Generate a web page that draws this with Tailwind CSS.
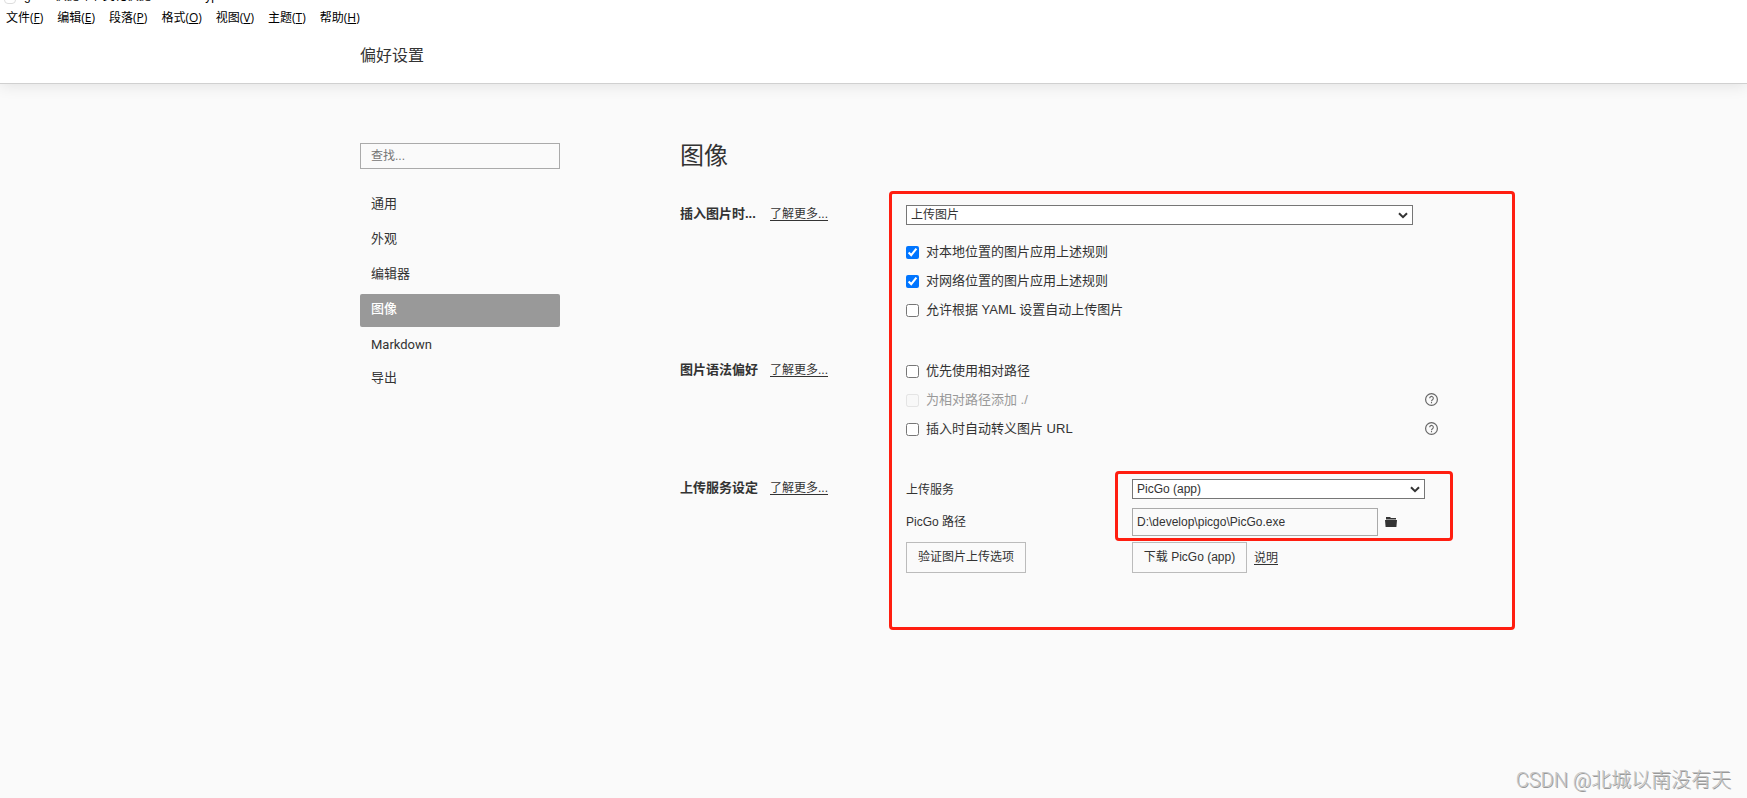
<!DOCTYPE html>
<html lang="zh-CN">
<head>
<meta charset="utf-8">
<title>偏好设置</title>
<script src="https://cdn.jsdelivr.net/npm/@tailwindcss/browser@4"></script>
</head>
<body class="relative min-h-screen overflow-hidden bg-[#fafafa] font-['Liberation_Sans','Noto_Sans_CJK_SC',sans-serif] text-[13px] leading-5 text-[#333]">
<header class="border-b border-[#d0d0d0] bg-white shadow-[0_0_16px_rgba(0,0,0,0.12)]">
  <div class="flex h-1 items-end overflow-hidden pl-1 text-xs leading-4 text-black">
    <span class="mr-2 h-4 w-3 rounded-sm border border-[#ddd]"></span>
    <span class="mr-6">g</span><span class="mr-12">快捷环节美化快捷</span><span>Typ</span>
  </div>
  <nav class="flex h-7 items-center gap-3.5 pl-1.5 font-['Open_Sans','Noto_Sans_CJK_SC',sans-serif] text-xs text-black" aria-label="菜单">
    <button>文件(<u>F</u>)</button>
    <button>编辑(<u>E</u>)</button>
    <button>段落(<u>P</u>)</button>
    <button>格式(<u>O</u>)</button>
    <button>视图(<u>V</u>)</button>
    <button>主题(<u>T</u>)</button>
    <button>帮助(<u>H</u>)</button>
  </nav>
  <div class="mx-auto flex h-[51px] w-full max-w-[1027px] items-center pb-1"><p class="text-base">偏好设置</p></div>
</header>

<main class="mx-auto flex w-full max-w-[1027px] pt-[59px]">
  <aside class="w-[200px] shrink-0">
    <input type="search" aria-label="查找" placeholder="查找..." class="block h-[26px] w-full border border-[#aaa] px-2.5 text-xs placeholder:text-[#757575]">
    <nav class="mt-5 flex flex-col gap-0.5" aria-label="设置分类">
      <a href="#general" class="h-[33px] rounded-xs px-[11px] leading-[30px]">通用</a>
      <a href="#appearance" class="h-[33px] rounded-xs px-[11px] leading-[30px]">外观</a>
      <a href="#editor" class="h-[33px] rounded-xs px-[11px] leading-[30px]">编辑器</a>
      <a href="#image" class="h-[33px] rounded-xs bg-[#999] px-[11px] leading-[30px] font-medium text-white">图像</a>
      <a href="#markdown" class="h-[33px] rounded-xs px-[11px] font-['Roboto',sans-serif] leading-8">Markdown</a>
      <a href="#export" class="h-[33px] rounded-xs px-[11px] leading-7">导出</a>
    </nav>
  </aside>

  <div class="ml-[120px] flex-1">
    <h1 class="text-2xl leading-[26px]">图像</h1>

    <div class="relative mt-9">
      <section class="flex">
        <div class="flex w-[226px] shrink-0 gap-3 leading-[18px]">
          <h2 class="w-[78px] font-bold">插入图片时...</h2><a href="#more1" class="text-xs leading-[18px] underline underline-offset-2">了解更多...</a>
        </div>
        <div class="flex-1">
          <div class="relative w-[507px]">
            <select aria-label="插入图片时" class="block h-5 w-full appearance-none border border-[#767676] bg-white pl-1 text-xs leading-[18px]"><option>上传图片</option></select>
            <svg class="pointer-events-none absolute top-[7px] right-[5px] h-[7px] w-[10px]" viewBox="0 0 10 7" fill="none" stroke="#333" stroke-width="2"><path d="M1 1.2 5 5.2 9 1.2"/></svg>
          </div>
          <div class="mt-[17px] flex flex-col gap-[9px]">
            <label class="flex items-center gap-[7px]"><input type="checkbox" checked class="size-[13px]">对本地位置的图片应用上述规则</label>
            <label class="flex items-center gap-[7px]"><input type="checkbox" checked class="size-[13px]">对网络位置的图片应用上述规则</label>
            <label class="flex items-center gap-[7px]"><input type="checkbox" class="size-[13px]">允许根据 YAML 设置自动上传图片</label>
          </div>
        </div>
      </section>

      <section class="mt-[41px] flex">
        <div class="flex w-[226px] shrink-0 gap-3 leading-[18px]">
          <h2 class="w-[78px] font-bold">图片语法偏好</h2><a href="#more2" class="text-xs leading-[18px] underline underline-offset-2">了解更多...</a>
        </div>
        <div class="flex w-[532px] flex-col gap-[9px]">
          <label class="flex items-center gap-[7px]"><input type="checkbox" class="size-[13px]">优先使用相对路径</label>
          <div class="flex items-center justify-between">
            <label class="flex items-center gap-[7px] text-[#999]"><input type="checkbox" disabled class="size-[13px] opacity-50">为相对路径添加 ./</label>
            <button aria-label="帮助" class="pb-0.5"><svg class="size-[13px]" viewBox="0 0 13 13" fill="none" stroke="#666"><circle cx="6.500" cy="6.500" r="5.900" stroke-width="1.200"/><path d="M4.700 5.200a1.800 1.800 0 1 1 2.800 1.500c-.7.500-1 .8-1 1.500M6.500 9v1.200" stroke-width="1.100"/></svg></button>
          </div>
          <div class="flex items-center justify-between">
            <label class="flex items-center gap-[7px]"><input type="checkbox" class="size-[13px]">插入时自动转义图片 URL</label>
            <button aria-label="帮助" class="pb-0.5"><svg class="size-[13px]" viewBox="0 0 13 13" fill="none" stroke="#666"><circle cx="6.500" cy="6.500" r="5.900" stroke-width="1.200"/><path d="M4.700 5.200a1.800 1.800 0 1 1 2.800 1.500c-.7.500-1 .8-1 1.500M6.500 9v1.200" stroke-width="1.100"/></svg></button>
          </div>
        </div>
      </section>

      <section class="mt-10 flex">
        <div class="flex w-[226px] shrink-0 gap-3 leading-[18px]">
          <h2 class="w-[78px] font-bold">上传服务设定</h2><a href="#more3" class="text-xs leading-[18px] underline underline-offset-2">了解更多...</a>
        </div>
        <div class="grid grid-cols-[226px_1fr] items-center text-xs">
          <label for="service" class="pt-0.5 leading-[18px]">上传服务</label>
          <div class="relative w-[293px]">
            <select id="service" class="block h-5 w-full appearance-none border border-[#767676] bg-white pl-1 leading-[18px]"><option>PicGo (app)</option></select>
            <svg class="pointer-events-none absolute top-[7px] right-[5px] h-[7px] w-[10px]" viewBox="0 0 10 7" fill="none" stroke="#333" stroke-width="2"><path d="M1 1.2 5 5.2 9 1.2"/></svg>
          </div>
          <label for="path" class="mt-[9px]">PicGo 路径</label>
          <div class="mt-[9px] flex items-center gap-[7px]">
            <input id="path" type="text" value="D:\develop\picgo\PicGo.exe" class="h-7 w-[246px] border border-[#aaa] px-1">
            <button aria-label="选择文件"><svg class="h-[10px] w-3" viewBox="0 0 12 10" fill="#333"><path d="M1 0h4l1 1h5v1.500H1zM0 3h12l-.6 7H.6z"/></svg></button>
          </div>
          <div class="mt-1.5"><button class="h-[31px] w-[120px] border border-[#bbb] pb-0.5">验证图片上传选项</button></div>
          <div class="mt-1.5 flex items-center gap-[7px]"><button class="h-[31px] w-[115px] border border-[#bbb] pb-0.5">下载 PicGo (app)</button><a href="#help" class="underline underline-offset-2">说明</a></div>
        </div>
      </section>

      <!-- Highlight frames over the settings -->
      <div class="pointer-events-none absolute -top-3.5 left-[209px] h-[439px] w-[626px] rounded-sm border-3 border-[#ff1e10]"></div>
      <div class="pointer-events-none absolute top-[266px] left-[435px] h-[70px] w-[338px] rounded-sm border-3 border-[#ff1e10]"></div>
    </div>
  </div>
</main>
<p class="absolute right-4 bottom-1.5 font-['Roboto','Noto_Sans_CJK_SC',sans-serif] text-xl leading-6 font-light text-[#c4c4c4] [text-shadow:1px_1px_0_#999]">CSDN @北城以南没有天</p>
</body>
</html>
